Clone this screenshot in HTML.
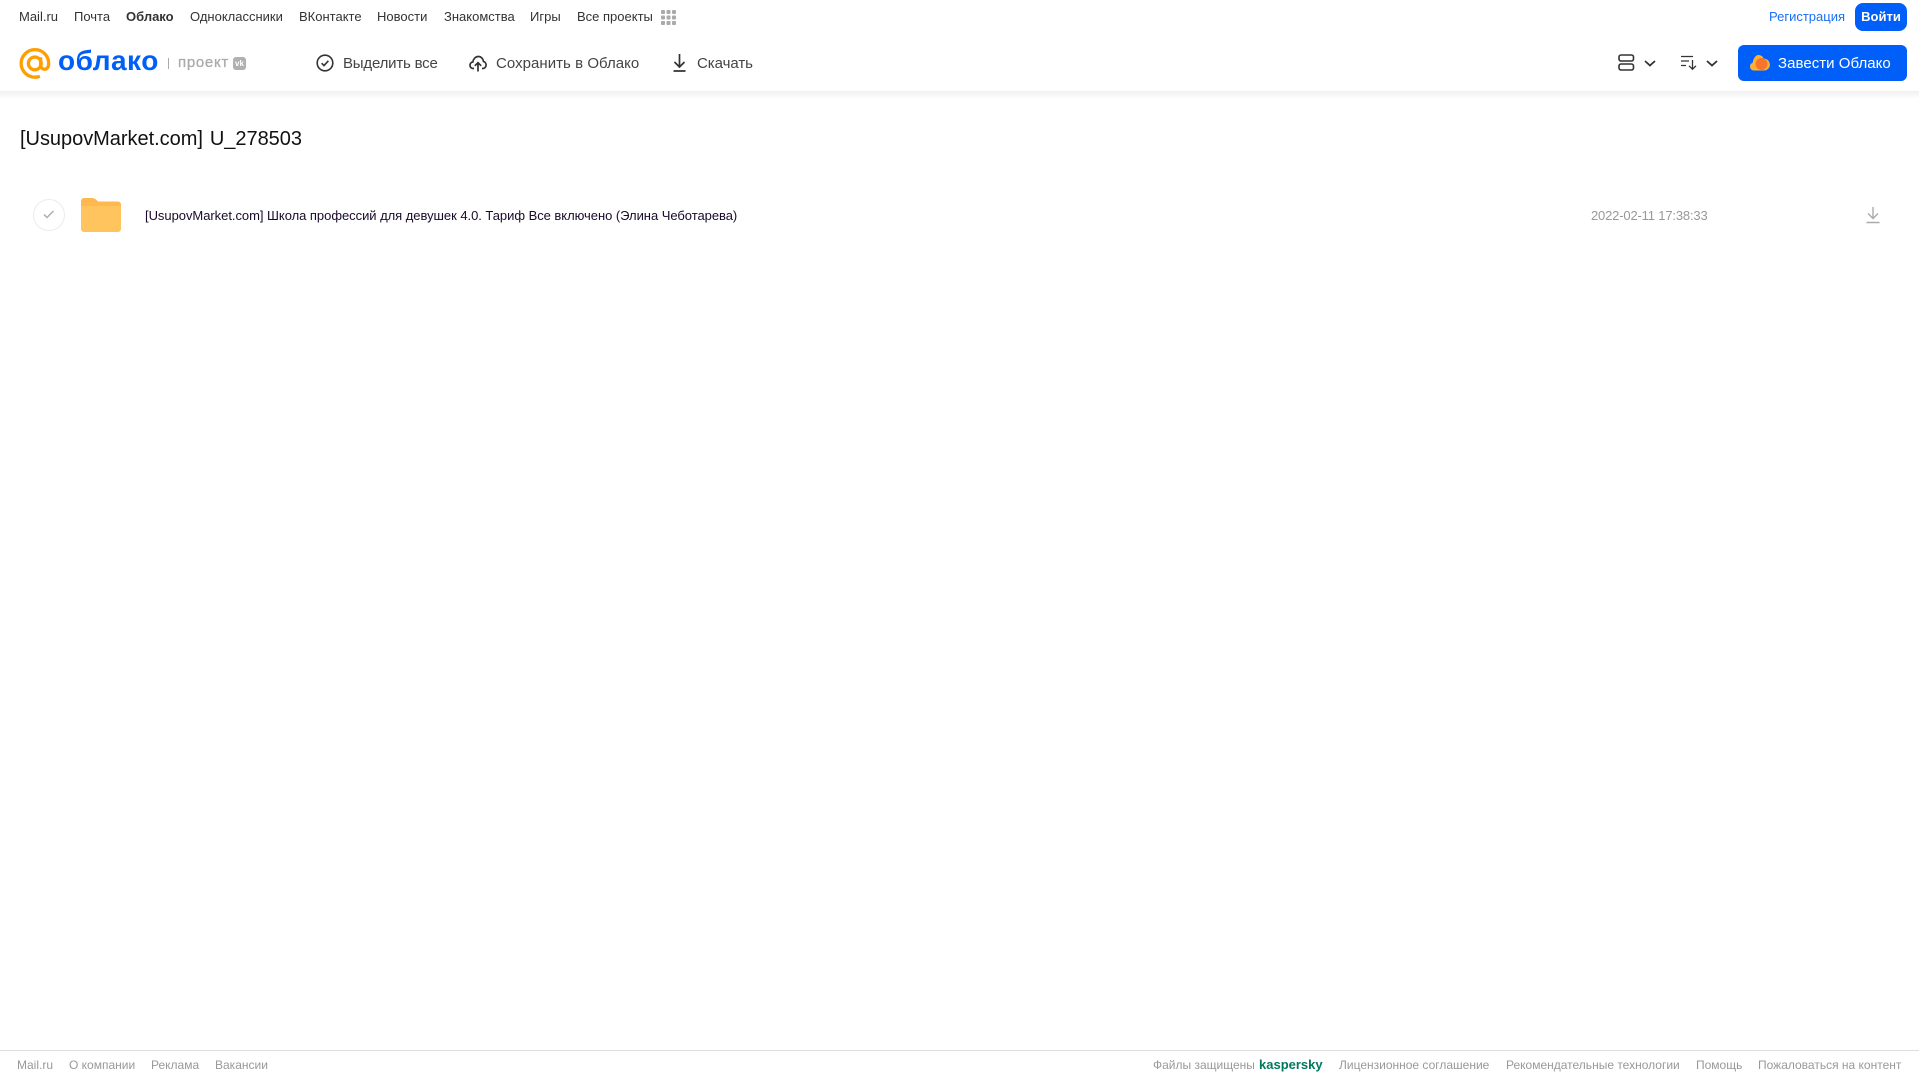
<!DOCTYPE html>
<html lang="ru"><head><meta charset="utf-8"><title>Облако</title>
<style>
html,body{margin:0;padding:0;background:#fff}
body{position:relative;width:1919px;height:1079px;overflow:hidden;font-family:"Liberation Sans",Arial,sans-serif}
.t{position:absolute;white-space:nowrap;line-height:16px}
.n{top:9px;font-size:13px;color:#333}
.b{top:56px;font-size:15px;color:#444;line-height:16px}
.f{top:1057px;font-size:12px;color:#999}
svg{position:absolute;overflow:visible}
</style></head><body>
<span class="t n" style="left:19px">Mail.ru</span>
<span class="t n" style="left:74px">Почта</span>
<span class="t n" style="left:126px;font-weight:700">Облако</span>
<span class="t n" style="left:190px">Одноклассники</span>
<span class="t n" style="left:299px">ВКонтакте</span>
<span class="t n" style="left:377px">Новости</span>
<span class="t n" style="left:444px">Знакомства</span>
<span class="t n" style="left:530px">Игры</span>
<span class="t n" style="left:577px">Все проекты</span>
<svg style="left:661px;top:10px" width="15" height="15" fill="#aaa"><rect width="4" height="4" rx="1"/><rect x="5.500" width="4" height="4" rx="1"/><rect x="11" width="4" height="4" rx="1"/><rect y="5.500" width="4" height="4" rx="1"/><rect x="5.500" y="5.500" width="4" height="4" rx="1"/><rect x="11" y="5.500" width="4" height="4" rx="1"/><rect y="11" width="4" height="4" rx="1"/><rect x="5.500" y="11" width="4" height="4" rx="1"/><rect x="11" y="11" width="4" height="4" rx="1"/></svg>
<span class="t n" style="left:1769px;color:#1a6ff5">Регистрация</span>
<div style="position:absolute;left:1855px;top:3px;width:52px;height:28px;border-radius:8px;background:#005ff9;color:#fff;font-size:13px;font-weight:700;text-align:center;line-height:27px">Войти</div>

<svg style="left:19px;top:47px" width="32" height="33" viewBox="0 0 33 33" fill="none" stroke="#ff9e00" stroke-width="3.400"><path d="M21.500 29.600C19.900 30.300 18.200 30.600 16.500 30.600 8.700 30.600 2.200 24.300 2.200 16.400S8.700 2.200 16.500 2.200 30.600 8.600 30.600 16.400c0 3.700-1.600 6-4.200 6-2.500 0-4.100-1.900-4.100-4.600V10"/><circle cx="16.300" cy="16.400" r="6.600"/></svg>
<span class="t" style="left:58px;top:43px;font-size:28px;line-height:36px;color:#005ff9;font-weight:700;letter-spacing:.5px">облако</span>
<div style="position:absolute;left:168px;top:58px;width:1px;height:11px;background:#aaa"></div>
<span class="t" style="left:178px;top:55px;font-size:15px;color:#aaa;letter-spacing:.7px;-webkit-text-stroke:.3px #aaa">проект</span>
<div style="position:absolute;left:233px;top:57px;width:13px;height:13px;border-radius:3px;background:#b0b0b0;color:#fff;font-size:8px;font-weight:700;line-height:13px;text-align:center">vk</div>

<svg style="left:316px;top:54px" width="18" height="18" viewBox="0 0 18 18" fill="none" stroke="#333" stroke-width="1.600"><circle cx="9" cy="9" r="7.800"/><path d="M5.600 9.200l2.400 2.400 4.400-4.800"/></svg>
<span class="t b" style="left:343px;letter-spacing:-.2px">Выделить все</span>
<svg style="left:469px;top:54px" width="18" height="18" viewBox="0 0 18 18" fill="none" stroke="#333" stroke-width="1.700"><path d="M5 14.500H4.200C2.300 14.500 1 13 1 11.200c0-1.700 1.200-3 2.800-3.200C4.200 5.100 6.400 2.500 9.300 2.500c2.800 0 4.900 2.300 5.200 5 1.500.3 2.600 1.800 2.600 3.500 0 1.900-1.400 3.500-3.200 3.500H13"/><path d="M9 17.500V9M5.800 11.800L9 8.700l3.200 3.100"/></svg>
<span class="t b" style="left:496px;letter-spacing:.04px">Сохранить в Облако</span>
<svg style="left:672px;top:54px" width="15" height="18" viewBox="0 0 15 18" fill="none" stroke="#333" stroke-width="1.700"><path d="M7.500 0v12.500M2.500 8l5 5 5-5M1.500 17h12"/></svg>
<span class="t b" style="left:697px;letter-spacing:-.05px">Скачать</span>

<svg style="left:1618px;top:54px" width="17" height="17" fill="none" stroke="#333" stroke-width="1.600"><rect x="1" y="1" width="14.500" height="6" rx="2"/><rect x="1" y="10" width="14.500" height="6" rx="2"/></svg>
<svg style="left:1644px;top:60px" width="12" height="7" fill="none" stroke="#333" stroke-width="1.800"><path d="M1 1l5 4.500L11 1"/></svg>
<svg style="left:1681px;top:55px" width="16" height="15" fill="none" stroke="#333" stroke-width="1.300"><path d="M0 1.500h12M0 6h8M0 10.500h5M11.500 5v9M8 10.800l3.500 3.400 3.500-3.400"/></svg>
<svg style="left:1706px;top:60px" width="12" height="7" fill="none" stroke="#333" stroke-width="1.800"><path d="M1 1l5 4.500L11 1"/></svg>
<div style="position:absolute;left:1738px;top:45px;width:169px;height:36px;border-radius:6px;background:#005ff9"></div>
<svg style="left:1750px;top:54px" width="20" height="17" viewBox="0 0 20 17"><path d="M4 16.500C1.800 16.500 0 14.800 0 12.500c0-1.800 1.100-3.300 2.700-3.800C3.100 5 5.400 1 8.500 1c2.400 0 4.400 1.500 5.200 3.600 3.300-.2 6.200 2.700 6.200 6 0 3.300-2.600 5.900-6 5.900z" fill="#ffb02e"/><circle cx="11.500" cy="10" r="6" fill="#f7752b"/></svg>
<span class="t" style="left:1778px;top:56px;font-size:15px;color:#fff;letter-spacing:.04px">Завести Облако</span>
<div style="position:absolute;left:0;top:91px;width:1919px;height:8px;background:linear-gradient(#f0f0f0,#fff)"></div>

<span class="t" style="left:20px;top:127px;font-size:20px;line-height:24px;color:#111;letter-spacing:-.03px;word-spacing:1.500px">[UsupovMarket.com] U_278503</span>

<div style="position:absolute;left:33px;top:199px;width:30px;height:30px;border:1px solid #ececec;border-radius:50%"></div>
<svg style="left:43px;top:210px" width="12" height="9" fill="none" stroke="#aaa" stroke-width="1.400"><path d="M1 4.500l3 3L10.500 1"/></svg>
<svg style="left:81px;top:198px" width="40" height="34" viewBox="0 0 40 34"><path d="M0 3a3 3 0 0 1 3-3h8c2 0 3 .8 4 1.500S16.500 3.500 18 3.500h19a3 3 0 0 1 3 3V8H0z" fill="#ffb84d"/><path d="M0 8h40v23a3 3 0 0 1-3 3H3a3 3 0 0 1-3-3z" fill="#ffc45e"/></svg>
<span class="t" style="left:145px;top:208px;font-size:13px;color:#1a0a2a;letter-spacing:-.04px">[UsupovMarket.com] Школа профессий для девушек 4.0. Тариф Все включено (Элина Чеботарева)</span>
<span class="t" style="left:1591px;top:208px;font-size:13px;color:#999;letter-spacing:-.17px">2022-02-11 17:38:33</span>
<svg style="left:1866px;top:206px" width="14" height="18" fill="none" stroke="#aaa" stroke-width="1.400"><path d="M7 1v11M2 7.500l5 5 5-5M0.500 16.500h13"/></svg>

<div style="position:absolute;left:0;top:1050px;width:1919px;height:1px;background:#ddd"></div>
<span class="t f" style="left:17px">Mail.ru</span>
<span class="t f" style="left:69px">О компании</span>
<span class="t f" style="left:151px">Реклама</span>
<span class="t f" style="left:215px">Вакансии</span>
<span class="t f" style="left:1153px">Файлы защищены</span>
<span class="t f" style="left:1259px;color:#00785f;font-weight:700;font-size:13px">kaspersky</span>
<span class="t f" style="left:1339px">Лицензионное соглашение</span>
<span class="t f" style="left:1506px">Рекомендательные технологии</span>
<span class="t f" style="left:1696px">Помощь</span>
<span class="t f" style="left:1758px">Пожаловаться на контент</span>
</body></html>
